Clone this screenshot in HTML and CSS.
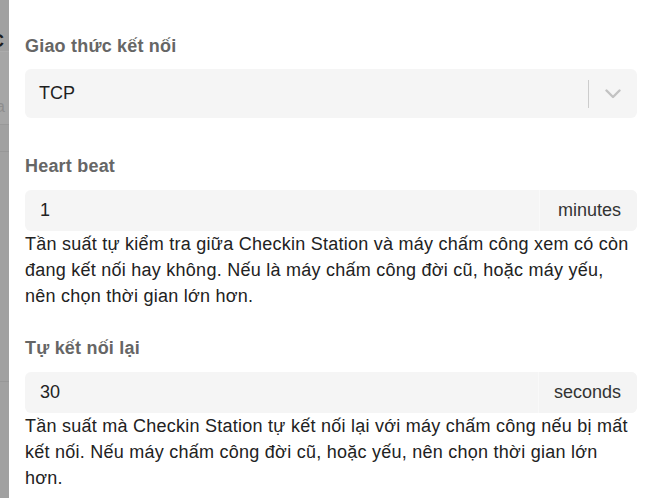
FILE: index.html
```html
<!DOCTYPE html>
<html lang="vi">
<head>
<meta charset="utf-8">
<title>Cài đặt kết nối</title>
<link rel="stylesheet" href="styles.css">
</head>
<body>
<div class="page">
  <div class="strip">
    <div class="strip-glyph">C</div>
    <div class="strip-band"><span class="strip-faint">a</span></div>
    <div class="strip-line strip-line-1"></div>
    <div class="strip-line strip-line-2"></div>
  </div>
  <div class="panel">
    <div class="field field-select">
      <div class="label">Giao thức kết nối</div>
      <div class="select">
        <span class="select-value">TCP</span>
        <span class="select-sep"></span>
        <span class="select-arrow">
          <svg width="16" height="10" viewBox="0 0 16 10"><path d="M1.5 1.5 L8 8 L14.5 1.5" fill="none" stroke="#c2c2c2" stroke-width="2.4" stroke-linecap="round" stroke-linejoin="round"/></svg>
        </span>
      </div>
    </div>
    <div class="field">
      <div class="label">Heart beat</div>
      <div class="input-group">
        <span class="input-value">1</span>
        <span class="addon addon-minutes">minutes</span>
      </div>
      <div class="help">Tần suất tự kiểm tra giữa Checkin Station và máy chấm công xem có còn đang kết nối hay không. Nếu là máy chấm công đời cũ, hoặc máy yếu, nên chọn thời gian lớn hơn.</div>
    </div>
    <div class="field">
      <div class="label">Tự kết nối lại</div>
      <div class="input-group">
        <span class="input-value">30</span>
        <span class="addon addon-seconds">seconds</span>
      </div>
      <div class="help">Tần suất mà Checkin Station tự kết nối lại với máy chấm công nếu bị mất kết nối. Nếu máy chấm công đời cũ, hoặc yếu, nên chọn thời gian lớn hơn.</div>
    </div>
  </div>
</div>
</body>
</html>
```
FILE: styles.css
```css
html, body {
  margin: 0;
  padding: 0;
  background: #ffffff;
}
body {
  font-family: "Liberation Sans", Arial, sans-serif;
  font-size: 18px;
  color: #222222;
}
.page {
  display: flex;
  width: 654px;
  height: 498px;
  overflow: hidden;
}
.strip {
  width: 9px;
  flex: 0 0 9px;
  background: #a1a1a1;
  overflow: hidden;
  display: flex;
  flex-direction: column;
}
.strip-glyph {
  margin-top: 31px;
  margin-left: -9px;
  font-weight: bold;
  font-size: 18px;
  line-height: 20px;
  color: #1c1c1c;
  height: 20px;
}
.strip-band {
  height: 72px;
  border-top: 1px solid #acacac;
  border-bottom: 1px solid #999999;
  background: #a6a6a6;
}
.strip-faint {
  display: block;
  margin-top: 46px;
  margin-left: -4px;
  color: #8e8e8e;
  font-size: 16px;
  line-height: 18px;
}
.strip-line {
  height: 1px;
  background: #979797;
}
.strip-line-1 {
  margin-top: 26px;
}
.strip-line-2 {
  margin-top: 229px;
}
.panel {
  flex: 1;
  background: #ffffff;
  padding: 33px 17px 0 16px;
}
.field {
  margin-bottom: 26px;
}
.field.field-select {
  margin-bottom: 35px;
}
.label {
  font-weight: bold;
  color: #666666;
  line-height: 26px;
  letter-spacing: 0.2px;
  margin-bottom: 11px;
}
.field-select .label {
  margin-bottom: 10px;
}
.select {
  height: 49px;
  background: #f5f5f5;
  border-radius: 6px;
  display: flex;
  align-items: center;
  padding-left: 14px;
}
.select-value {
  flex: 1;
  color: #1f1f1f;
}
.select-sep {
  width: 1px;
  height: 28px;
  background: #cccccc;
}
.select-arrow {
  width: 48px;
  display: flex;
  justify-content: center;
  align-items: center;
}
.select-arrow svg {
  display: block;
}
.input-group {
  height: 41px;
  display: flex;
  align-items: stretch;
  border-radius: 6px;
  overflow: hidden;
  background: #f5f5f5;
}
.input-value {
  flex: 1;
  display: flex;
  align-items: center;
  padding-left: 15px;
  color: #222222;
}
.addon {
  display: flex;
  align-items: center;
  padding: 0 16px 0 18px;
  border-left: 1px solid #f9f9f9;
  background: #f4f4f4;
  color: #333333;
}
.addon-seconds {
  padding-left: 15px;
}
.help {
  line-height: 26px;
  letter-spacing: 0.25px;
  color: #222222;
}
```
